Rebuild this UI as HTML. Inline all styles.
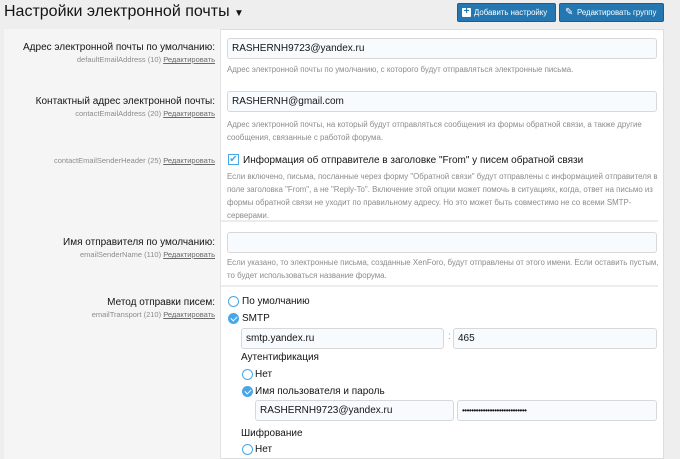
<!DOCTYPE html>
<html><head><meta charset="utf-8"><style>
*{box-sizing:border-box;margin:0;padding:0}
body{width:680px;height:450px;overflow:hidden;background:#eee;font-family:"Liberation Sans","Noto Sans CJK SC",sans-serif;color:#141414;position:relative}
.a{position:absolute;white-space:nowrap}
h1{position:absolute;left:4px;top:3px;font-size:16px;font-weight:normal;color:#141414;white-space:nowrap}
.btn{position:absolute;top:3px;height:19px;background:#2577b1;border:1px solid #1b5f90;border-radius:2px;color:#fff;font-size:7.8px;line-height:17px;padding-left:17px;white-space:nowrap;overflow:hidden}
.panel{position:absolute;left:4px;top:29px;width:660px;height:430px;background:#fff;border:1px solid #dcdcdc}
.left{position:absolute;left:4px;top:29px;width:217px;height:430px;background:#f5f5f5;border-right:1px solid #e3e3e3}
.lab{position:absolute;right:465px;font-size:10px;color:#141414;text-align:right;white-space:nowrap}
.sub{position:absolute;right:465px;font-size:7.5px;color:#8c8c8c;white-space:nowrap}
.sub u{color:#6a6a6a}
.in{position:absolute;height:21px;background:#f8fbfe;border:1px solid #d8d8d8;border-radius:3px;font-size:10px;line-height:19px;padding-left:4px;color:#141414;white-space:nowrap}
.d{position:absolute;left:227px;font-size:7.9px;color:#8c8c8c;line-height:13px;width:432px}
.hr{position:absolute;left:221px;width:437px;height:2px;background:#ececec}
.t{position:absolute;font-size:10px;white-space:nowrap}
.r{position:absolute;width:11px;height:11px;border:1.5px solid #47a7eb;border-radius:50%;background:#fff}
.rc{position:absolute;width:11px;height:11px;border-radius:50%;background:#47a7eb}
.rc:after{content:"";position:absolute;left:3.5px;top:2px;width:3px;height:5px;border:solid #fff;border-width:0 1.5px 1.5px 0;transform:rotate(45deg)}
</style></head><body>
<h1>Настройки электронной почты <span style="font-size:10px">▼</span></h1>
<div class="btn" style="left:457px;width:99px;padding-left:16px"><span style="position:absolute;left:4px;top:4px;width:9px;height:9px;background:#fff;border-radius:1px;color:#2577b1;font-size:10px;line-height:8px;text-align:center;font-weight:bold">+</span>Добавить настройку</div>
<div class="btn" style="left:559px;width:105px;padding-left:17px"><span style="position:absolute;left:5px;top:0px;font-size:10px">✎</span>Редактировать группу</div>
<div class="panel"></div>
<div class="left"></div>

<div class="lab" style="top:42px">Адрес электронной почты по умолчанию:</div>
<div class="sub" style="top:55px">defaultEmailAddress (10) <u>Редактировать</u></div>
<div class="in" style="left:227px;top:38px;width:430px">RASHERNH9723@yandex.ru</div>
<div class="d" style="top:63px">Адрес электронной почты по умолчанию, с которого будут отправляться электронные письма.</div>

<div class="lab" style="top:96px">Контактный адрес электронной почты:</div>
<div class="sub" style="top:109px">contactEmailAddress (20) <u>Редактировать</u></div>
<div class="in" style="left:227px;top:91px;width:430px">RASHERNH@gmail.com</div>
<div class="d" style="top:118px">Адрес электронной почты, на который будут отправляться сообщения из формы обратной связи, а также другие сообщения, связанные с работой форума.</div>

<div class="sub" style="top:156px">contactEmailSenderHeader (25) <u>Редактировать</u></div>
<div class="a" style="left:228px;top:154px;width:11px;height:11px;border:1.5px solid #47a7eb;background:#fff;color:#47a7eb;font-size:10px;line-height:9px;text-align:center">✔</div>
<div class="t" style="left:243px;top:155px">Информация об отправителе в заголовке "From" у писем обратной связи</div>
<div class="d" style="top:170px">Если включено, письма, посланные через форму "Обратной связи" будут отправлены с информацией отправителя в поле заголовка "From", а не "Reply-To". Включение этой опции может помочь в ситуациях, когда, ответ на письмо из формы обратной связи не уходит по правильному адресу. Но это может быть совместимо не со всеми SMTP-серверами.</div>
<div class="hr" style="top:220px"></div>

<div class="lab" style="top:237px">Имя отправителя по умолчанию:</div>
<div class="sub" style="top:250px">emailSenderName (110) <u>Редактировать</u></div>
<div class="in" style="left:227px;top:232px;width:430px"></div>
<div class="d" style="top:256px">Если указано, то электронные письма, созданные XenForo, будут отправлены от этого имени. Если оставить пустым, то будет использоваться название форума.</div>
<div class="hr" style="top:285px"></div>

<div class="lab" style="top:297px">Метод отправки писем:</div>
<div class="sub" style="top:310px">emailTransport (210) <u>Редактировать</u></div>
<div class="r" style="left:228px;top:296px"></div><div class="t" style="left:242px;top:296px">По умолчанию</div>
<div class="rc" style="left:228px;top:313px"></div><div class="t" style="left:242px;top:313px">SMTP</div>
<div class="in" style="left:241px;top:328px;width:203px">smtp.yandex.ru</div>
<div class="t" style="left:448px;top:331px;color:#c88">:</div>
<div class="in" style="left:453px;top:328px;width:204px">465</div>
<div class="t" style="left:241px;top:352px">Аутентификация</div>
<div class="r" style="left:242px;top:369px"></div><div class="t" style="left:255px;top:369px">Нет</div>
<div class="rc" style="left:242px;top:386px"></div><div class="t" style="left:255px;top:386px">Имя пользователя и пароль</div>
<div class="in" style="left:255px;top:400px;width:199px">RASHERNH9723@yandex.ru</div>
<div class="in" style="left:457px;top:400px;width:200px;font-size:8px;letter-spacing:-0.5px">••••••••••••••••••••••••••••</div>
<div class="t" style="left:241px;top:428px">Шифрование</div>
<div class="r" style="left:242px;top:444px"></div><div class="t" style="left:255px;top:444px">Нет</div>
</body></html>
